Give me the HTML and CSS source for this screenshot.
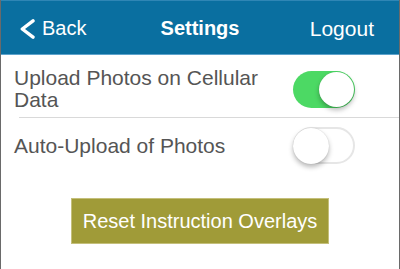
FILE: index.html
```html
<!DOCTYPE html>
<html>
<head>
<meta charset="utf-8">
<link rel="stylesheet" href="styles.css">
</head>
<body>
<div class="screen">
  <header class="nav">
    <a class="back">
      <svg class="chev" width="15" height="20" viewBox="0 0 15 20"><polyline points="13,1.8 2.3,10 13,18.2" fill="none" stroke="#fff" stroke-width="3.4" stroke-linecap="round" stroke-linejoin="round"/></svg>
      <span>Back</span>
    </a>
    <h1 class="title">Settings</h1>
    <a class="logout">Logout</a>
  </header>
  <div class="settings">
    <div class="row row-first">
      <span class="label">Upload Photos on Cellular Data</span>
      <span class="switch on"><span class="knob"></span></span>
    </div>
    <div class="divider"></div>
    <div class="row row-second">
      <span class="label">Auto-Upload of Photos</span>
      <span class="switch off"><span class="knob"></span></span>
    </div>
  </div>
  <div class="actions">
    <button class="reset">Reset Instruction Overlays</button>
  </div>
</div>
</body>
</html>
```
FILE: styles.css
```css
html, body {
  margin: 0;
  padding: 0;
  background: #fff;
}
.screen {
  box-sizing: border-box;
  width: 400px;
  min-height: 269px;
  border-left: 1px solid #6a6a6a;
  border-right: 1px solid #6a6a6a;
  font-family: "Liberation Sans", Arial, sans-serif;
}
.nav {
  box-sizing: border-box;
  height: 55px;
  background: #0a6fa0;
  border-top: 1px solid #2f86b5;
  border-bottom: 1px solid #5da3cc;
  display: grid;
  grid-template-columns: 1fr auto 1fr;
  align-items: center;
  padding-top: 2px;
  color: #fff;
}
.back {
  display: flex;
  align-items: center;
  font-size: 20px;
  padding-left: 19px;
  gap: 7px;
}
.chev {
  display: block;
  margin-top: 0;
}
.title {
  margin: 0;
  font-size: 20px;
  font-weight: bold;
}
.logout {
  justify-self: end;
  font-size: 21px;
  padding-right: 25px;
}
.row {
  display: flex;
  align-items: center;
  padding-left: 13px;
  padding-right: 44px;
  gap: 20px;
}
.row-first {
  padding-top: 12px;
  padding-bottom: 6px;
}
.row-second {
  padding-top: 9px;
  padding-bottom: 9px;
}
.label {
  flex: 1;
  font-size: 21px;
  line-height: 22px;
  color: #555;
}
.switch {
  box-sizing: border-box;
  flex: none;
  width: 62px;
  height: 37px;
  border-radius: 19px;
  display: flex;
  align-items: center;
  padding: 1px;
}
.switch.on {
  background: #4cd964;
  justify-content: flex-end;
}
.switch.off {
  background: #fff;
  border: 2px solid #e6e6e6;
  justify-content: flex-start;
  padding: 0;
}
.knob {
  width: 35px;
  height: 35px;
  border-radius: 50%;
  background: #fff;
  box-shadow: 0 3px 5px rgba(0, 0, 0, 0.28), 0 0 1px rgba(0, 0, 0, 0.2);
}
.switch.off .knob {
  margin-left: -2px;
  width: 36px;
  height: 36px;
}
.divider {
  height: 1px;
  background: #d9d9d9;
  margin-left: 18px;
}
.actions {
  display: flex;
  justify-content: center;
  padding-top: 25px;
}
.reset {
  box-sizing: border-box;
  width: 258px;
  height: 46px;
  background: #a09b38;
  border: 1px solid #c4bf7a;
  color: #fff;
  font-family: "Liberation Sans", Arial, sans-serif;
  font-size: 20px;
  padding: 0;
}
```
